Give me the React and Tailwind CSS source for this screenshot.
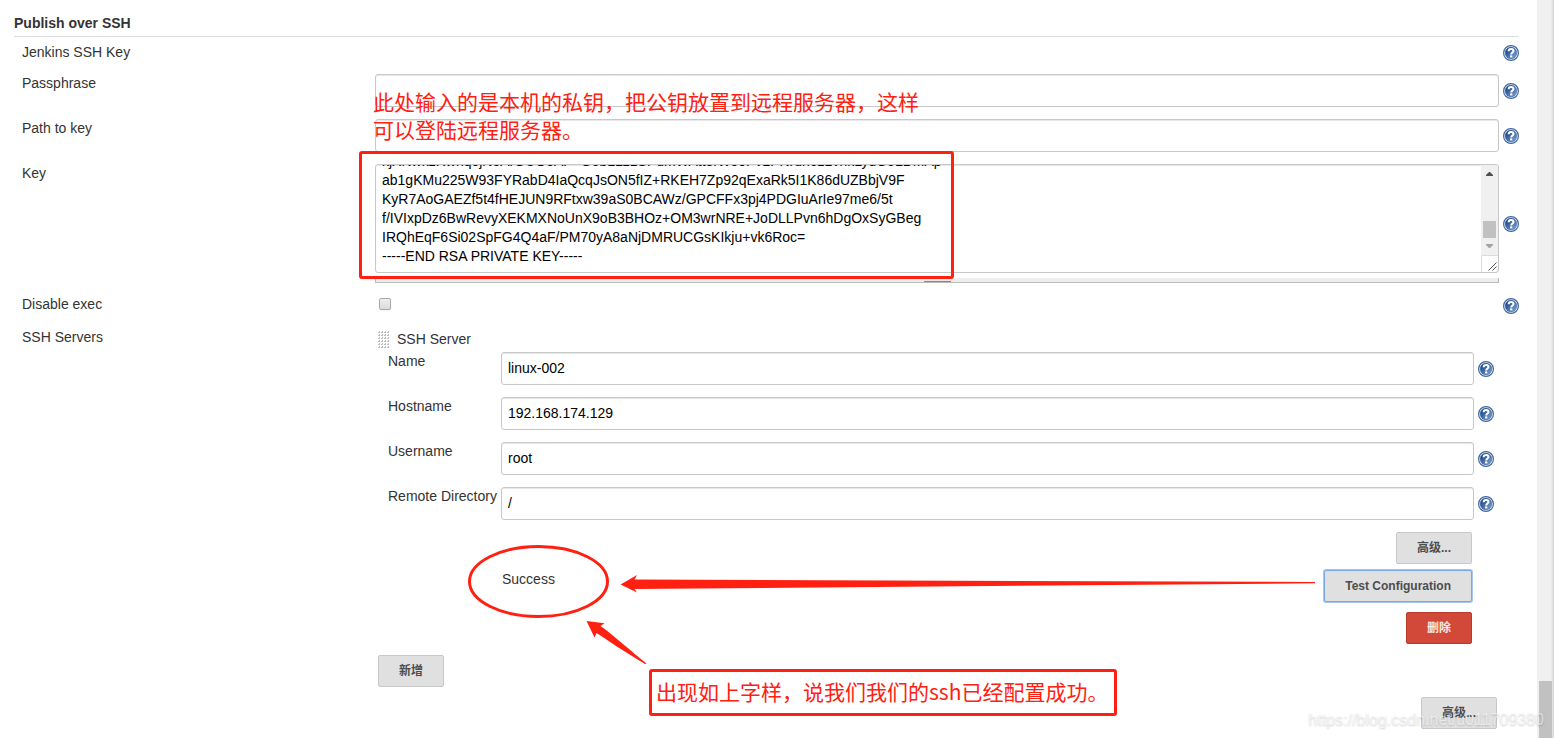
import { useEffect, useRef } from "react";

const PRIVATE_KEY = `-----BEGIN RSA PRIVATE KEY-----
kjXNwkzRwhq0jNoArGUOoAP+GobLLz1SPumWAtt3Nv50PvLPNrun6z1vnkLydG0LDMAp
ab1gKMu225W93FYRabD4IaQcqJsON5fIZ+RKEH7Zp92qExaRk5I1K86dUZBbjV9F
KyR7AoGAEZf5t4fHEJUN9RFtxw39aS0BCAWz/GPCFFx3pj4PDGIuArIe97me6/5t
f/IVIxpDz6BwRevyXEKMXNoUnX9oB3BHOz+OM3wrNRE+JoDLLPvn6hDgOxSyGBeg
IRQhEqF6Si02SpFG4Q4aF/PM70yA8aNjDMRUCGsKIkju+vk6Roc=
-----END RSA PRIVATE KEY-----`;

const inputClass =
  "block h-[33px] w-full min-w-0 rounded-[3px] border border-[#c8c8c8] bg-white px-1.5 pb-0.5 text-black shadow-[inset_0_1px_1px_rgba(0,0,0,0.1)] outline-none";

const buttonClass =
  "h-8 rounded-xs border border-[#c8c8c8] bg-[#e0e0e0] px-5 text-xs font-bold text-[#4d4d4d]";

function HelpLink({ topic }) {
  return (
    <a href="#help" aria-label={`Help for ${topic}`} className="block size-4 shrink-0">
      <svg viewBox="0 0 16 16" className="size-4">
        <defs>
          <linearGradient id="helpFill" x1="0" y1="0" x2="1" y2="1">
            <stop offset="0.2" stopColor="#1f4a8c" />
            <stop offset="1" stopColor="#86aad8" />
          </linearGradient>
        </defs>
        <circle cx="8" cy="8" r="7.4" fill="#fff" stroke="#3f689f" strokeWidth="1.2" />
        <circle cx="8" cy="8" r="5.9" fill="url(#helpFill)" stroke="#3a629c" strokeWidth="0.5" />
        <path
          d="M5.600 6.300C5.600 4.600 6.600 3.900 8.100 3.900c1.500 0 2.400.8 2.400 2C10.500 7.500 8.200 7.500 8.200 9.500"
          fill="none"
          stroke="#fff"
          strokeWidth="2"
        />
        <rect x="7.100" y="10.400" width="2.200" height="2" fill="#fff" />
      </svg>
    </a>
  );
}

function Row({ label, htmlFor, help = true, children }) {
  return (
    <div className="flex">
      <label htmlFor={htmlFor} className="w-[361px] shrink-0 self-start pl-2">
        {label}
      </label>
      <div className="flex min-w-0 flex-1 items-center gap-1">
        <div className="min-w-0 flex-1">{children}</div>
        {help ? <HelpLink topic={label} /> : <span className="w-4 shrink-0" />}
      </div>
    </div>
  );
}

function ServerField({ id, label, value }) {
  return (
    <div className="flex">
      <label htmlFor={id} className="w-[113px] shrink-0 whitespace-nowrap">
        {label}
      </label>
      <div className="flex min-w-0 flex-1 items-center gap-1">
        <input id={id} type="text" defaultValue={value} className={inputClass} />
        <HelpLink topic={label} />
      </div>
    </div>
  );
}

function KeyField() {
  const ref = useRef(null);
  useEffect(() => {
    ref.current.scrollTop = ref.current.scrollHeight;
  }, []);
  return (
    <div>
      <div className="flex h-[109px] overflow-hidden rounded-[3px] border border-[#c8c8c8] bg-white shadow-[inset_0_1px_1px_rgba(0,0,0,0.1)]">
        <textarea
          id="key"
          ref={ref}
          defaultValue={PRIVATE_KEY}
          spellCheck={false}
          className="block h-full min-w-0 flex-1 resize-none overflow-hidden bg-transparent p-1.5 leading-[19px] text-black outline-none"
        />
        <div aria-hidden="true" className="flex w-[17px] shrink-0 flex-col">
          <div className="flex flex-1 flex-col items-center bg-[#f0f0f0] pt-[7px]">
            <svg viewBox="0 0 7 4" className="h-1 w-[7px]">
              <path d="M0 4V3L3 0H4L7 3V4Z" fill="#505050" />
            </svg>
            <div className="mt-[45px] h-[17px] w-[13px] bg-[#c1c1c1]" />
            <svg viewBox="0 0 7 4" className="mt-1.5 h-1 w-[7px]">
              <path d="M0 0V1L3 4H4L7 1V0Z" fill="#a3a3a3" />
            </svg>
          </div>
          <svg viewBox="0 0 17 17" className="size-[17px]">
            <path d="M0.500 17V0.500H17" fill="none" stroke="#dcdcdc" />
            <path d="M7.500 15.500 15.500 7.500M11.500 15.500 15.500 11.500" stroke="#555" fill="none" />
          </svg>
        </div>
      </div>
      <div className="mt-[5px] flex h-[5px] justify-center border-x border-b border-[#bbbbb5] bg-[#eee]">
        <div className="h-1 w-[27px] border-y border-[#888]" />
      </div>
    </div>
  );
}

function DragHandle() {
  return (
    <svg viewBox="0 0 12 18" className="h-[18px] w-3 shrink-0">
      <defs>
        <pattern id="grip" width="3" height="3" patternUnits="userSpaceOnUse">
          <path d="M0 2H1V1H2V3H0Z" fill="#bbb" />
        </pattern>
      </defs>
      <rect width="12" height="18" fill="url(#grip)" />
    </svg>
  );
}

function Annotations() {
  return (
    <div className="pointer-events-none absolute inset-0 text-[21px] leading-7 text-[#ff2012] [font-family:'Noto_Sans_CJK_SC',sans-serif]">
      <p className="absolute top-[87px] left-[373px] whitespace-nowrap">
        此处输入的是本机的私钥，把公钥放置到远程服务器，这样
        <br />
        可以登陆远程服务器。
      </p>
      <div className="absolute top-[151px] left-[359px] h-32 w-[595px] rounded-[3px] border-3 border-[#ff2012]" />
      <svg viewBox="0 0 190 125" className="absolute top-[543px] left-[465px] h-[125px] w-[190px]">
        <ellipse cx="73.500" cy="38.500" rx="69" ry="35" fill="none" stroke="#ff2012" strokeWidth="3" />
        <path
          d="M121.500 78 139.500 80.300 135.500 83 C142 87 160 103 181.500 120.500 L180 121 C160 109 142 97 131.500 90 L129.500 94.500Z"
          fill="#ff2012"
        />
      </svg>
      <div className="absolute top-[574px] right-[221px] left-[620px] h-5">
        <svg viewBox="0 0 696 20" preserveAspectRatio="none" className="h-5 w-full">
          <path d="M0.500 10.500 17 1 14.500 5.500 695 8 695 9.300 14.500 15 17 18.500Z" fill="#ff2012" />
        </svg>
      </div>
      <p className="absolute top-[669px] left-[649px] h-[47px] w-[468px] rounded-[3px] border-3 border-[#ff2012] px-1 py-[5px] whitespace-nowrap">
        出现如上字样，说我们我们的ssh已经配置成功。
      </p>
    </div>
  );
}

export default function App() {
  return (
    <div className="relative flex min-h-screen bg-white text-sm leading-[18px] text-[#333] [font-family:'Liberation_Sans','Noto_Sans_CJK_SC',sans-serif]">
      <main className="relative min-w-0 flex-1 pt-3.5 pr-[18px] pl-3.5">
        <h1 className="mb-1.5 border-b border-[#ddd] pb-1 text-sm leading-[18px] font-bold">Publish over SSH</h1>

        <Row label="Jenkins SSH Key">
          <div className="h-5" />
        </Row>
        <div className="mt-[11px] flex flex-col gap-3">
          <Row label="Passphrase" htmlFor="passphrase">
            <input id="passphrase" type="password" className={inputClass} />
          </Row>
          <Row label="Path to key" htmlFor="path">
            <input id="path" type="text" className={inputClass} />
          </Row>
          <Row label="Key" htmlFor="key">
            <KeyField />
          </Row>
          <Row label="Disable exec" htmlFor="disable">
            <div className="flex h-[22px] pt-[3px] pl-1">
              <input
                id="disable"
                type="checkbox"
                className="size-3 appearance-none rounded-xs border border-[#a8a8a8] bg-linear-to-b from-[#eee] to-[#dcdcdc] shadow-xs"
              />
            </div>
          </Row>
        </div>

        <div className="mt-[11px]">
          <Row label="SSH Servers" help={false}>
            <div className="pt-0.5 pl-[3px]">
              <div className="flex gap-[7px]">
                <DragHandle />
                <span>SSH Server</span>
              </div>
              <div className="mt-1 flex flex-col gap-3 pr-[5px] pl-2.5">
                <ServerField id="name" label="Name" value="linux-002" />
                <ServerField id="hostname" label="Hostname" value="192.168.174.129" />
                <ServerField id="username" label="Username" value="root" />
                <ServerField id="remote" label="Remote Directory" value="/" />
              </div>
              <div className="mt-3 flex flex-col items-end pr-[27px]">
                <button type="button" className={buttonClass}>
                  高级...
                </button>
                <div className="mt-1.5 flex w-full justify-between pl-[124px]">
                  <span role="status">Success</span>
                  <button
                    type="button"
                    className="h-8 rounded-xs border border-[#7ba7e8] bg-[#e0e0e0] px-5 text-xs font-bold text-[#4d4d4d] shadow-[0_0_0_1px_#a5c5f5]"
                  >
                    Test Configuration
                  </button>
                </div>
                <button
                  type="button"
                  className="mt-2.5 h-8 rounded-xs border border-[#b83c2c] bg-[#d24939] px-5 text-xs font-bold text-[#f2e9e8]"
                >
                  删除
                </button>
              </div>
              <button type="button" className={`mt-[11px] block ${buttonClass}`}>
                新增
              </button>
              <div className="mt-2.5 flex justify-end pr-0.5">
                <button type="button" className={buttonClass}>
                  高级...
                </button>
              </div>
            </div>
          </Row>
        </div>

        <Annotations />
      </main>

      <div
        aria-hidden="true"
        className="flex w-[17px] shrink-0 flex-col items-center justify-end bg-linear-to-r from-[#f0f0f0] from-80% to-[#d4d4d4]"
      >
        <div className="h-[57px] w-[13px] bg-[#c1c1c1]" />
      </div>

      <p className="pointer-events-none absolute right-2.5 bottom-2 text-base leading-5 text-white/60 [text-shadow:0_1px_2px_rgba(0,0,0,0.2)]">
        https://blog.csdn.net/u011709380
      </p>
    </div>
  );
}
